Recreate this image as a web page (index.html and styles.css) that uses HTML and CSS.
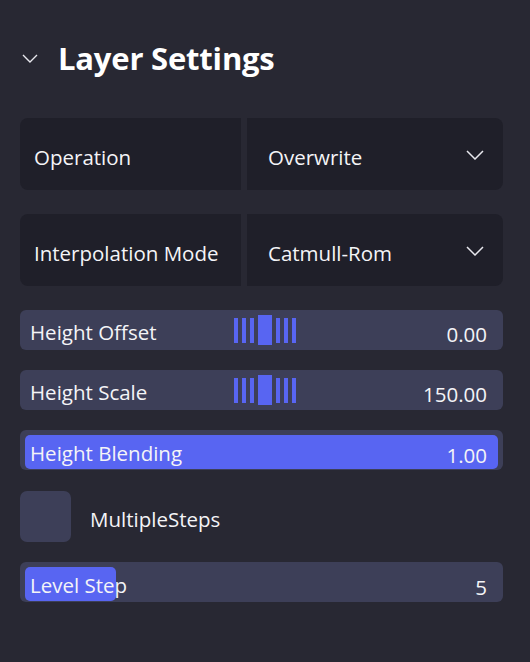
FILE: index.html
```html
<!DOCTYPE html>
<html lang="en">
<head>
<meta charset="utf-8">
<title>Layer Settings</title>
<link rel="stylesheet" href="styles.css">
</head>
<body>
<div class="panel">
  <div class="header">
    <svg class="header-chev" width="16" height="9" viewBox="0 0 16 9"><path d="M1 1 L8 8 L15 1" fill="none" stroke="#e8e8ee" stroke-width="1.4"/></svg>
    <h1 class="title">Layer Settings</h1>
  </div>

  <div class="combo-row">
    <div class="cell cell-label"><span class="txt">Operation</span></div>
    <div class="cell cell-value">
      <span class="txt">Overwrite</span>
      <svg class="combo-chev" width="18" height="10" viewBox="0 0 18 10"><path d="M1 1 L9 9 L17 1" fill="none" stroke="#e8e8ee" stroke-width="1.5"/></svg>
    </div>
  </div>

  <div class="combo-row">
    <div class="cell cell-label"><span class="txt">Interpolation Mode</span></div>
    <div class="cell cell-value">
      <span class="txt">Catmull-Rom</span>
      <svg class="combo-chev" width="18" height="10" viewBox="0 0 18 10"><path d="M1 1 L9 9 L17 1" fill="none" stroke="#e8e8ee" stroke-width="1.5"/></svg>
    </div>
  </div>

  <div class="drag-row gap-first">
    <span class="drag-label">Height Offset</span>
    <span class="ticks"><i></i><i></i><i></i><b></b><i></i><i></i><i></i></span>
    <span class="drag-value">0.00</span>
  </div>

  <div class="drag-row">
    <span class="drag-label">Height Scale</span>
    <span class="ticks"><i></i><i></i><i></i><b></b><i></i><i></i><i></i></span>
    <span class="drag-value">150.00</span>
  </div>

  <div class="fill-row">
    <div class="fill" style="width:100%"></div>
    <div class="fill-content"><span class="fill-label">Height Blending</span><span class="fill-value">1.00</span></div>
  </div>

  <div class="check-row">
    <span class="checkbox"></span>
    <span class="check-label">MultipleSteps</span>
  </div>

  <div class="fill-row">
    <div class="fill" style="width:91px"></div>
    <div class="fill-content"><span class="fill-label">Level Step</span><span class="fill-value">5</span></div>
  </div>
</div>
</body>
</html>
```

FILE: styles.css
```css
html, body {
  margin: 0;
  padding: 0;
  background: #282833;
  height: 100%;
}
body {
  font-family: "Open Sans", "Noto Sans", sans-serif;
  color: #f4f4f7;
  font-size: 20.5px;
}
.panel {
  padding: 0 27px 0 20px;
  display: flex;
  flex-direction: column;
}
.header {
  display: flex;
  align-items: center;
  height: 60px;
  margin-top: 28px;
}
.header-chev {
  margin-left: 2px;
  margin-right: 20px;
}
.title {
  margin: 0;
  font-size: 31px;
  font-weight: 700;
  letter-spacing: -0.2px;
  color: #ffffff;
}
.combo-row {
  display: grid;
  grid-template-columns: 221px 1fr;
  column-gap: 6px;
  height: 72px;
  margin-top: 30px;
}
.combo-row + .combo-row {
  margin-top: 24px;
}
.cell {
  background: #1f1f29;
  display: flex;
  align-items: center;
}
.txt {
  padding-top: 5px;
}
.cell-label {
  border-radius: 8px 0 0 8px;
  padding-left: 14px;
}
.cell-value {
  border-radius: 0 8px 8px 0;
  padding-left: 21px;
  padding-right: 19px;
  justify-content: space-between;
}
.combo-chev {
  margin-top: 2px;
}
.drag-row {
  display: grid;
  grid-template-columns: 204px auto 1fr;
  align-items: center;
  height: 40px;
  background: #3d3f58;
  border-radius: 6px;
  padding: 0 16px 0 10px;
  margin-top: 20px;
}
.gap-first {
  margin-top: 24px;
}
.drag-label {
  padding-top: 3px;
}
.drag-value {
  text-align: right;
  padding-top: 7px;
}
.ticks {
  display: flex;
  align-items: center;
  gap: 4px;
}
.ticks i {
  display: block;
  width: 4px;
  height: 25px;
  background: #5865f2;
}
.ticks b {
  display: block;
  width: 14px;
  height: 30px;
  background: #5865f2;
}
.fill-row {
  display: grid;
  height: 40px;
  box-sizing: border-box;
  padding: 5px;
  background: #3d3f58;
  border-radius: 6px;
  margin-top: 20px;
}
.fill, .fill-content {
  grid-area: 1 / 1;
}
.fill {
  background: #5865f2;
  border-radius: 5px;
}
.fill-content {
  display: flex;
  justify-content: space-between;
  align-items: center;
  padding: 0 11px 0 5px;
}
.fill-label {
  padding-top: 1px;
}
.fill-value {
  padding-top: 6px;
}
.check-row {
  display: flex;
  align-items: center;
  margin-top: 20px;
  height: 52px;
}
.checkbox {
  width: 51px;
  height: 51px;
  border-radius: 7px;
  background: #3d3f58;
}
.check-label {
  margin-left: 19px;
  padding-top: 5px;
}
.check-row + .fill-row {
  margin-top: 20px;
}
```
